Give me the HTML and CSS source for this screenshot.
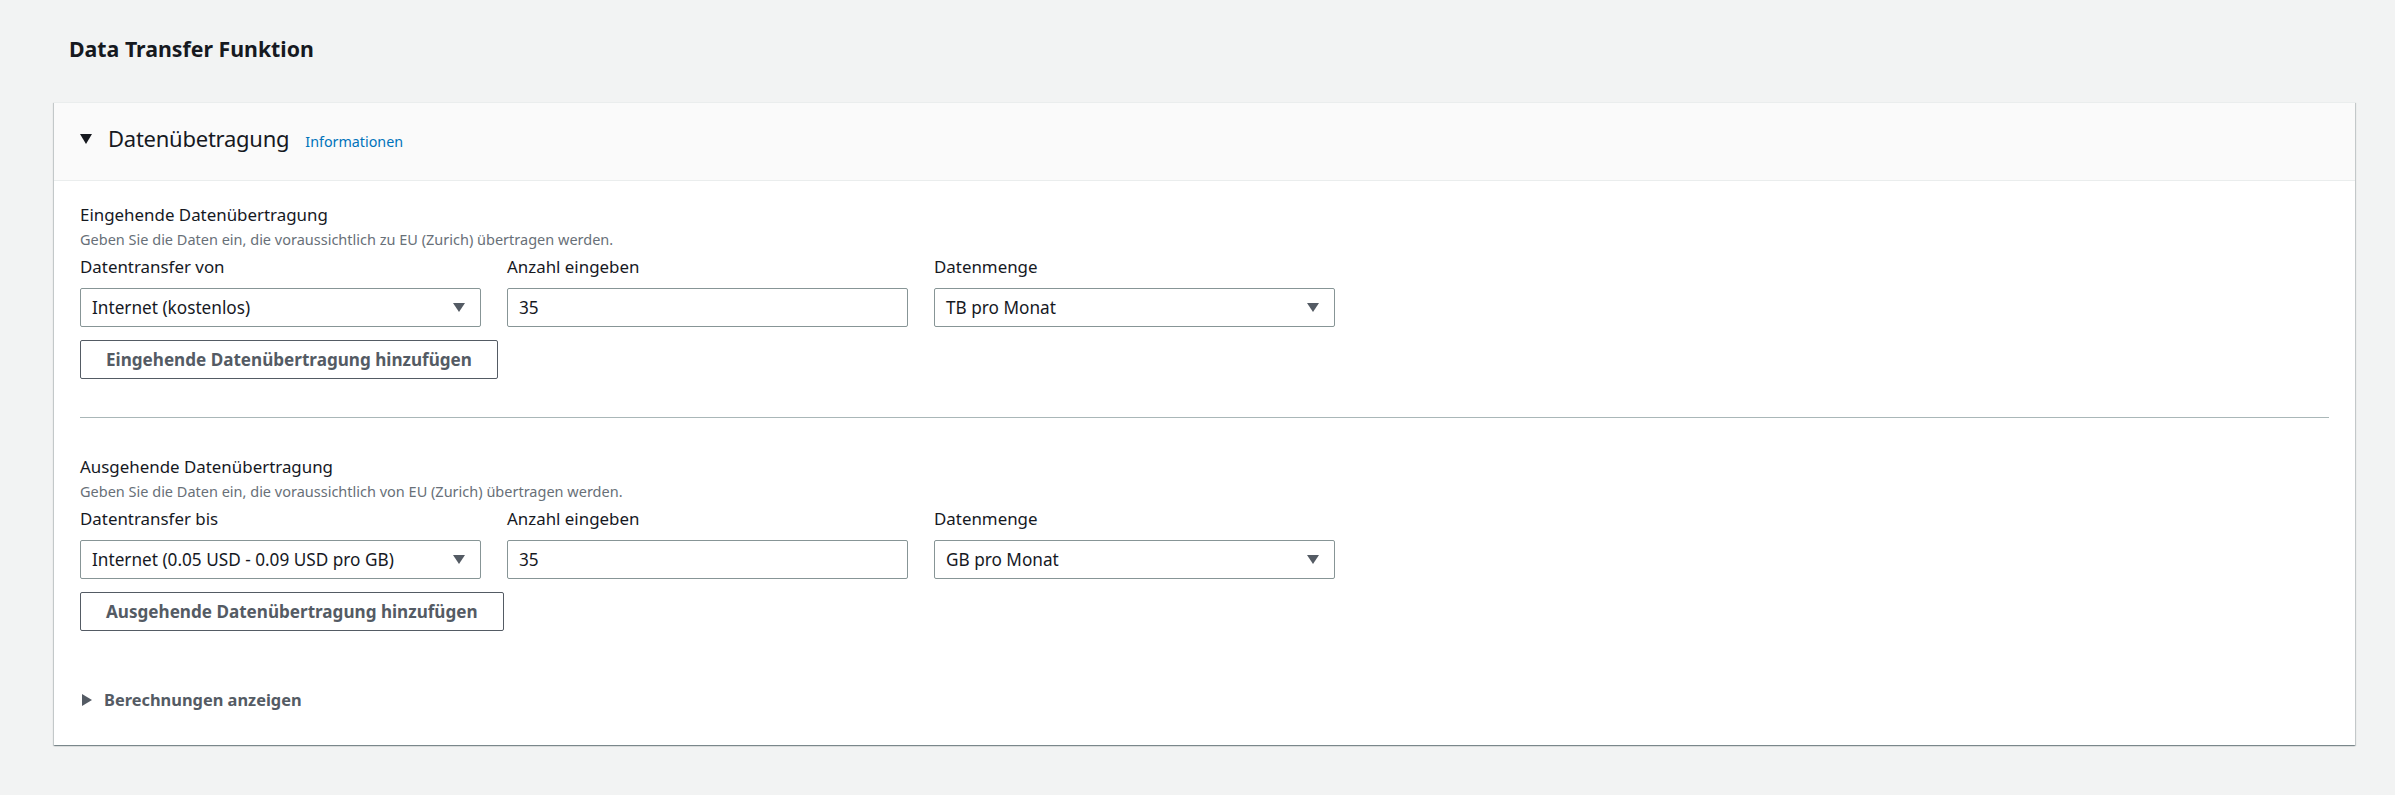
FILE: index.html
```html
<!DOCTYPE html>
<html lang="de">
<head>
<meta charset="utf-8">
<title>Data Transfer Funktion</title>
<link rel="stylesheet" href="styles.css">
</head>
<body>
<main class="page">
  <h2 class="page-title">Data Transfer Funktion</h2>
  <section class="panel">
    <header class="panel-header">
      <svg class="caret-down" width="12" height="10" viewBox="0 0 12 10"><path d="M0 0H12L6 10Z" fill="#16191f"/></svg>
      <h3 class="panel-title">Datenübetragung</h3>
      <a class="info-link" href="#">Informationen</a>
    </header>
    <div class="panel-body">
      <div class="transfer-section">
        <div class="section-title">Eingehende Datenübertragung</div>
        <div class="section-desc">Geben Sie die Daten ein, die voraussichtlich zu EU (Zurich) übertragen werden.</div>
        <div class="field-row">
          <div class="field">
            <div class="field-label">Datentransfer von</div>
            <div class="select-box"><span>Internet (kostenlos)</span><svg class="select-arrow" width="12" height="9" viewBox="0 0 12 9"><path d="M0 0H12L6 9Z" fill="#545b64"/></svg></div>
          </div>
          <div class="field">
            <div class="field-label">Anzahl eingeben</div>
            <div class="input-box">35</div>
          </div>
          <div class="field">
            <div class="field-label">Datenmenge</div>
            <div class="select-box"><span>TB pro Monat</span><svg class="select-arrow" width="12" height="9" viewBox="0 0 12 9"><path d="M0 0H12L6 9Z" fill="#545b64"/></svg></div>
          </div>
        </div>
        <button class="btn" type="button">Eingehende Datenübertragung hinzufügen</button>
      </div>
      <hr class="divider">
      <div class="transfer-section">
        <div class="section-title">Ausgehende Datenübertragung</div>
        <div class="section-desc">Geben Sie die Daten ein, die voraussichtlich von EU (Zurich) übertragen werden.</div>
        <div class="field-row">
          <div class="field">
            <div class="field-label">Datentransfer bis</div>
            <div class="select-box"><span>Internet (0.05 USD - 0.09 USD pro GB)</span><svg class="select-arrow" width="12" height="9" viewBox="0 0 12 9"><path d="M0 0H12L6 9Z" fill="#545b64"/></svg></div>
          </div>
          <div class="field">
            <div class="field-label">Anzahl eingeben</div>
            <div class="input-box">35</div>
          </div>
          <div class="field">
            <div class="field-label">Datenmenge</div>
            <div class="select-box"><span>GB pro Monat</span><svg class="select-arrow" width="12" height="9" viewBox="0 0 12 9"><path d="M0 0H12L6 9Z" fill="#545b64"/></svg></div>
          </div>
        </div>
        <button class="btn" type="button">Ausgehende Datenübertragung hinzufügen</button>
      </div>
      <div class="expander">
        <svg class="caret-right" width="10" height="12" viewBox="0 0 10 12"><path d="M0 0L10 6L0 12Z" fill="#545b64"/></svg>
        <span>Berechnungen anzeigen</span>
      </div>
    </div>
  </section>
</main>
</body>
</html>
```

FILE: styles.css
```css
* { box-sizing: border-box; }
html, body { margin: 0; padding: 0; }
body {
  background: #f2f3f3;
  font-family: "Noto Sans", "Open Sans", sans-serif;
  color: #16191f;
}
.page {
  padding: 34px 40px 49px 54px;
}
.page-title {
  margin: 0 0 38px 15px;
  font-size: 21.3px;
  line-height: 30px;
  font-weight: 700;
  color: #16191f;
}
.panel {
  background: #fff;
  border-top: 1px solid #eaeded;
  box-shadow: 0 1px 1px 0 rgba(0,28,36,.3), 1px 1px 1px 0 rgba(0,28,36,.15), -1px 1px 1px 0 rgba(0,28,36,.15);
}
.panel-header {
  display: flex;
  align-items: baseline;
  background: #fafafa;
  border-bottom: 1px solid #eaeded;
  padding: 19px 26px 26px 26px;
}
.caret-down {
  align-self: center;
  margin-right: 16px;
  margin-top: 2px;
}
.panel-title {
  margin: 0;
  font-size: 22px;
  letter-spacing: -0.25px;
  line-height: 32px;
  font-weight: 400;
  color: #16191f;
}
.info-link {
  margin-left: 16px;
  font-size: 14.3px;
  color: #0073bb;
  text-decoration: none;
}
.panel-body {
  padding: 23px 26px 34px 26px;
}
.section-title {
  font-size: 16.9px;
  line-height: 22px;
}
.section-desc {
  margin-top: 3px;
  font-size: 14.5px;
  line-height: 20px;
  color: #687078;
}
.field-row {
  display: grid;
  grid-template-columns: repeat(3, 401px);
  column-gap: 26px;
  margin-top: 7px;
}
.field-label {
  font-size: 16.9px;
  line-height: 22px;
  margin-bottom: 10px;
}
.select-box, .input-box {
  display: flex;
  align-items: center;
  height: 39px;
  border: 1px solid #879596;
  border-radius: 2px;
  padding: 0 15px 0 11px;
  font-size: 17.2px;
  color: #16191f;
  background: #fff;
}
.select-box span { flex: 1; }
.btn {
  display: block;
  margin-top: 13px;
  height: 39px;
  padding: 0 25px;
  border: 1px solid #545b64;
  border-radius: 2px;
  background: #fff;
  font-family: inherit;
  font-size: 17.1px;
  font-weight: 700;
  color: #545b64;
}
.divider {
  border: 0;
  border-top: 1px solid #aab7b8;
  margin: 38px 0 38px 0;
}
.expander {
  display: flex;
  align-items: center;
  margin-top: 58px;
  font-size: 16.4px;
  line-height: 22px;
  font-weight: 700;
  color: #545b64;
}
.caret-right {
  margin: 0 12px 0 2px;
}
```
